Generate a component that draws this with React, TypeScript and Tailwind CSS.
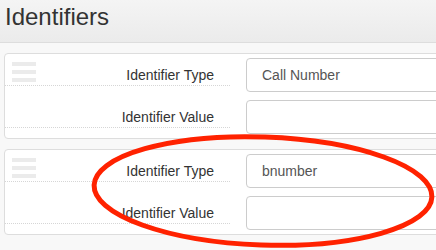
import React from "react";

function Handle() {
  return (
    <div className="absolute left-[7px] top-[8px] flex w-[24px] flex-col gap-[4px]">
      <div className="h-[4px] w-full bg-[#ebebeb]" />
      <div className="h-[4px] w-full bg-[#ebebeb]" />
      <div className="h-[4px] w-full bg-[#ebebeb]" />
    </div>
  );
}

function Row({ label, value }: { label: string; value: string }) {
  return (
    <div className="flex h-[34px] items-start">
      <div className="mt-[7px] h-[21px] w-[225px] shrink-0 border-b border-dotted border-[#d6d6d6] pr-[16px] text-right text-[14px] leading-[20px] text-[#333]">
        {label}
      </div>
      <div className="ml-[16px] flex h-[34px] w-[230px] shrink-0 items-center rounded-[4px] border border-[#ccc] bg-white pl-[15px] text-[14px] text-[#555]">
        {value}
      </div>
    </div>
  );
}

function Card({ type }: { type: string }) {
  return (
    <div className="relative w-[480px] rounded-[4px] border border-[#ddd] bg-white pt-[4px] pb-[4px]">
      <Handle />
      <div className="flex flex-col gap-[8px]">
        <Row label="Identifier Type" value={type} />
        <Row label="Identifier Value" value="" />
      </div>
    </div>
  );
}

export default function App() {
  return (
    <div
      className="relative h-[250px] w-[436px] overflow-hidden bg-[#f8f8f8]"
      style={{ fontFamily: '"Liberation Sans", Arial, sans-serif' }}
    >
      <div className="h-[43px] border-b border-[#dddddd] bg-gradient-to-b from-[#f4f4f4] to-[#ebebeb] pl-[5px] pt-[2px] text-[24px] leading-[30px] text-[#333]">
        Identifiers
      </div>
      <div className="flex flex-col gap-[10px] pl-[4px] pt-[10px]">
        <Card type="Call Number" />
        <Card type="bnumber" />
      </div>
      <svg
        className="pointer-events-none absolute left-0 top-0"
        width="436"
        height="250"
        viewBox="0 0 436 250"
      >
        <ellipse
          cx="263"
          cy="191"
          rx="169"
          ry="54"
          transform="rotate(2 263 191)"
          fill="none"
          stroke="#ff2200"
          strokeWidth="5"
        />
      </svg>
    </div>
  );
}
